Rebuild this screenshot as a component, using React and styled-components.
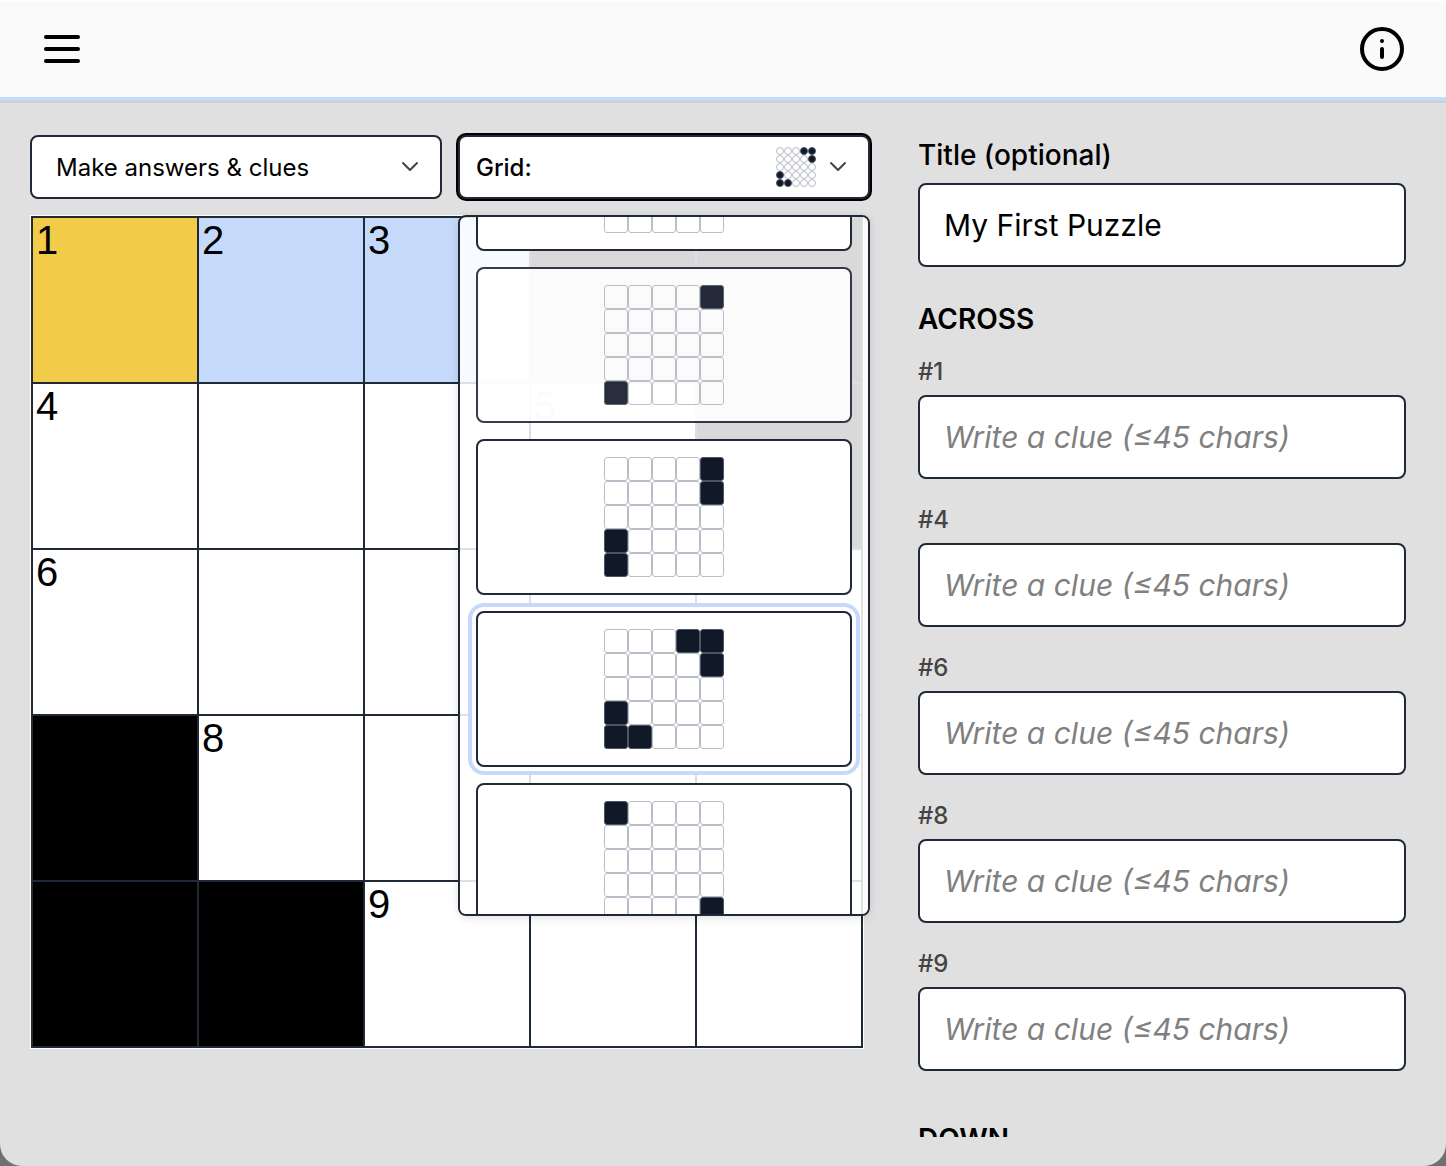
import React, { useEffect, useRef, useState } from 'react';
import styled, { createGlobalStyle } from 'styled-components';

const INK = '#1f2937';
const BLUE = '#c5dafa';

const GlobalStyle = createGlobalStyle`
  * {
    box-sizing: border-box;
  }

  body {
    margin: 0;
    background: #707070;
    color: #000;
    font-family: Inter, 'Liberation Sans', sans-serif;
  }

  button, input, select {
    font: inherit;
    color: inherit;
  }
`;

const Page = styled.div`
  display: flex;
  flex-direction: column;
  height: 100vh;
  overflow: hidden;
  background: #e0e0e0;
  border-radius: 0 0 22px 22px;
`;

const Header = styled.header`
  display: flex;
  justify-content: space-between;
  align-items: center;
  flex: none;
  height: 101px;
  padding: 0 40px;
  background: #fafafa;
  border-top: 1px solid #fff;
  border-bottom: 4px solid ${BLUE};
  box-shadow: 0 2px 0 #cfcfd3;
`;

const IconButton = styled.button`
  display: flex;
  padding: 0;
  border: none;
  background: none;
  cursor: pointer;
`;

const Main = styled.main`
  display: grid;
  grid-template-columns: 105fr 61fr;
  gap: 48px;
  flex: 1;
  min-height: 0;
  padding: 34px 40px 29px 30px;
`;

const Editor = styled.section`
  display: flex;
  flex-direction: column;
  gap: 16px;
  min-width: 0;
`;

const Toolbar = styled.div`
  display: grid;
  grid-template-columns: 1fr 1fr;
  gap: 16px;
`;

const Picker = styled.div`
  position: relative;
`;

const ModeSelect = styled.select`
  width: 100%;
  height: 64px;
  padding: 0 48px 0 24px;
  border: 2px solid ${INK};
  border-radius: 8px;
  background: #fff;
  font-size: 24px;
  appearance: none;
`;

const SelectArrow = styled.span`
  position: absolute;
  top: 0;
  right: 22px;
  height: 100%;
  display: flex;
  align-items: center;
  pointer-events: none;
`;

const GridTrigger = styled.button`
  display: flex;
  align-items: center;
  gap: 12px;
  width: 100%;
  height: 64px;
  padding: 0 20px 0 16px;
  border: 2px solid ${INK};
  border-radius: 8px;
  background: #fff;
  box-shadow: 0 0 0 2px #000;
  font-size: 24px;
  font-weight: 500;
  cursor: pointer;
`;

const TriggerLabel = styled.span`
  flex: 1;
  text-align: left;
`;

const Menu = styled.div`
  position: absolute;
  top: calc(100% + 16px);
  left: 0;
  z-index: 2;
  display: flex;
  flex-direction: column;
  gap: 16px;
  width: 100%;
  height: 701px;
  padding: 16px;
  overflow-y: auto;
  scrollbar-width: none;
  border: 2px solid ${INK};
  border-radius: 8px;
  background: rgba(255, 255, 255, 0.85);
  box-shadow: 0 2px 8px rgba(0, 0, 0, 0.12);
`;

const Option = styled.button`
  display: flex;
  justify-content: center;
  flex: none;
  padding: 16px;
  border: 2px solid ${INK};
  border-radius: 8px;
  background: #fff;
  opacity: ${props => props.$hovered ? 0.9 : 1};
  box-shadow: ${props => props.$selected ? `0 0 0 4px #fff, 0 0 0 8px ${BLUE}` : 'none'};
  cursor: pointer;
`;

const Board = styled.div`
  display: grid;
  grid-template-columns: repeat(5, 1fr);
  gap: 2px;
  width: 100%;
  max-width: 834px;
  padding: 2px;
  border: 1px solid #fff;
  background: ${INK};
`;

const cellColors = {
  block: '#000',
  cursor: '#f2cc49',
  word: BLUE,
  open: '#fff',
};

const Cell = styled.div`
  aspect-ratio: 1;
  padding-left: 3px;
  background: ${props => cellColors[props.$kind]};
  font-family: 'Liberation Sans', sans-serif;
  font-size: 40px;
  line-height: 44px;
`;

const CluePanel = styled.form`
  display: flex;
  flex-direction: column;
  min-width: 0;
  overflow-y: auto;
  scrollbar-width: none;
`;

const Field = styled.div`
  display: flex;
  flex-direction: column;
  flex: none;
  margin-bottom: 24px;
`;

const TitleLabel = styled.label`
  margin-bottom: 8px;
  font-size: 28px;
  font-weight: 500;
  line-height: 40px;
`;

const ClueLabel = styled.label`
  margin-bottom: 6px;
  color: #444;
  font-size: 24px;
  font-weight: 500;
  line-height: 34px;
`;

const TextInput = styled.input`
  width: 100%;
  height: 84px;
  padding: 0 24px;
  border: 2px solid ${INK};
  border-radius: 8px;
  background: #fff;
  font-size: 30px;
  outline: none;

  &::placeholder {
    color: #808080;
    font-style: italic;
    opacity: 1;
  }
`;

const DirectionHeading = styled.h2`
  flex: none;
  margin: ${props => props.$first ? '8px' : '24px'} 0 16px;
  font-size: 28px;
  font-weight: 600;
  line-height: 40px;
`;

// '#' is a block, '.' is an open square
const layouts = [
  ['.....', '.....', '.....', '.....', '.....'],
  ['....#', '.....', '.....', '.....', '#....'],
  ['....#', '....#', '.....', '#....', '#....'],
  ['...##', '....#', '.....', '#....', '##...'],
  ['#....', '.....', '.....', '.....', '....#'],
];

const across = [1, 4, 6, 8, 9];

const numberCells = (rows) => {
  let next = 1;
  const isBlock = (r, c) => r < 0 || c < 0 || rows[r][c] === '#';
  return rows.flatMap((row, r) =>
    [...row].map((square, c) => {
      const starts = square !== '#' && (isBlock(r - 1, c) || isBlock(r, c - 1));
      return { square, r, c, number: starts ? next++ : null };
    })
  );
};

const cellKind = ({ square, r, c }) => {
  if (square === '#') return 'block';
  if (r === 0 && c === 0) return 'cursor';
  return r === 0 ? 'word' : 'open';
};

const MiniGrid = ({ rows, size, radius }) => (
  <svg width={size * 5} height={size * 5} aria-hidden="true">
    {rows.flatMap((row, r) =>
      [...row].map((square, c) => (
        <rect
          key={`${r}-${c}`}
          x={c * size + 0.5}
          y={r * size + 0.5}
          width={size - 1}
          height={size - 1}
          rx={radius}
          fill={square === '#' ? '#111827' : '#fff'}
          stroke={square === '#' ? '#4b5563' : '#b9bdc7'}
        />
      ))
    )}
  </svg>
);

const Chevron = () => (
  <svg width="20" height="20" viewBox="0 0 20 20" fill="none" stroke="#444" strokeWidth="2" strokeLinecap="round" strokeLinejoin="round" aria-hidden="true">
    <path d="M3 6l7 7 7-7" />
  </svg>
);

const MenuIcon = () => (
  <svg width="44" height="48" viewBox="0 0 44 48" stroke="#000" strokeWidth="4" strokeLinecap="round" aria-hidden="true">
    <path d="M6 12h32M6 24h32M6 36h32" />
  </svg>
);

const InfoIcon = () => (
  <svg width="48" height="48" viewBox="0 0 48 48" fill="none" stroke="#000" strokeWidth="4" strokeLinecap="round" aria-hidden="true">
    <circle cx="24" cy="24" r="20" />
    <path d="M24 24v8M24 16v0.01" />
  </svg>
);

const ClueField = ({ direction, number }) => (
  <Field>
    <ClueLabel htmlFor={`${direction}-${number}`}>#{number}</ClueLabel>
    <TextInput id={`${direction}-${number}`} maxLength={45} placeholder="Write a clue (≤45 chars)" />
  </Field>
);

const App = () => {
  const [title, setTitle] = useState('My First Puzzle');
  const [selected, setSelected] = useState(3);
  const [hovered, setHovered] = useState(1);
  const [open, setOpen] = useState(true);
  const menuRef = useRef(null);

  useEffect(() => {
    if (open) {
      menuRef.current.scrollTop = 138;
    }
  }, [open]);

  return (
    <Page>
      <GlobalStyle />
      <Header>
        <IconButton aria-label="Menu"><MenuIcon /></IconButton>
        <IconButton aria-label="Info"><InfoIcon /></IconButton>
      </Header>

      <Main>
        <Editor>
          <Toolbar>
            <Picker>
              <ModeSelect aria-label="Mode">
                <option>Make answers &amp; clues</option>
              </ModeSelect>
              <SelectArrow><Chevron /></SelectArrow>
            </Picker>
            <Picker>
              <GridTrigger type="button" aria-expanded={open} onClick={() => setOpen(!open)}>
                <TriggerLabel>Grid:</TriggerLabel>
                <MiniGrid rows={layouts[selected]} size={8} radius={3.5} />
                <Chevron />
              </GridTrigger>
              {open && (
                <Menu ref={menuRef}>
                  {layouts.map((rows, i) => (
                    <Option
                      key={i}
                      type="button"
                      aria-label={`Grid ${i + 1}`}
                      $selected={i === selected}
                      $hovered={i === hovered}
                      onMouseEnter={() => setHovered(i)}
                      onClick={() => setSelected(i)}
                    >
                      <MiniGrid rows={rows} size={24} radius={2.5} />
                    </Option>
                  ))}
                </Menu>
              )}
            </Picker>
          </Toolbar>

          <Board>
            {numberCells(layouts[selected]).map(cell => (
              <Cell key={`${cell.r}-${cell.c}`} $kind={cellKind(cell)}>{cell.number}</Cell>
            ))}
          </Board>
        </Editor>

        <CluePanel>
          <Field>
            <TitleLabel htmlFor="title">Title (optional)</TitleLabel>
            <TextInput id="title" value={title} onChange={(e) => setTitle(e.target.value)} />
          </Field>
          <DirectionHeading $first>ACROSS</DirectionHeading>
          {across.map(n => <ClueField key={n} direction="across" number={n} />)}
          <DirectionHeading>DOWN</DirectionHeading>
        </CluePanel>
      </Main>
    </Page>
  );
};

export default App;
